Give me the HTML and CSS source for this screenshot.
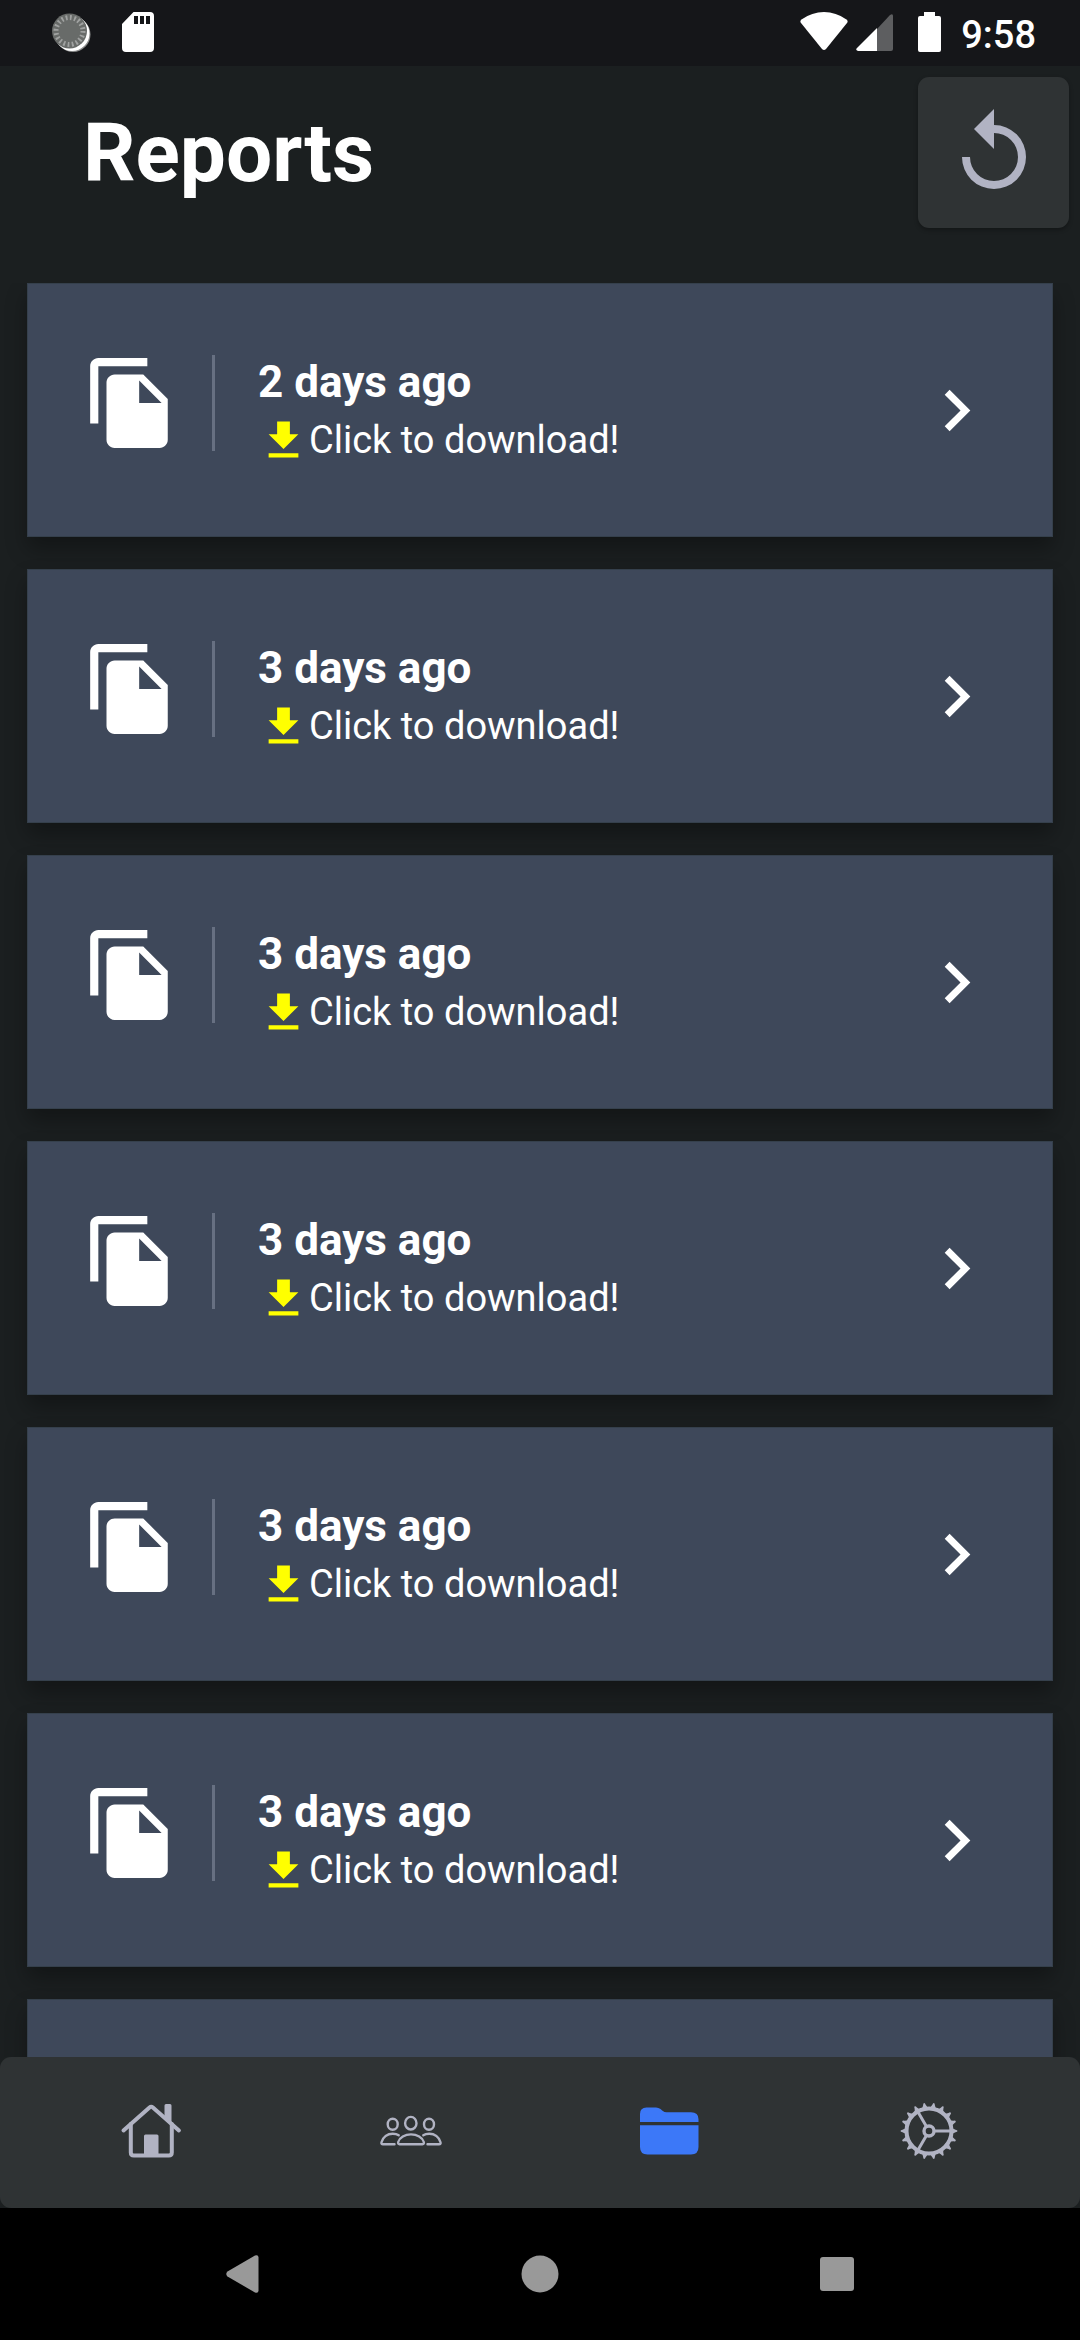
FILE: index.html
```html
<!DOCTYPE html>
<html lang="en">
<head>
<meta charset="utf-8">
<meta name="viewport" content="width=device-width, initial-scale=1">
<title>Reports</title>
<link rel="stylesheet" href="styles.css">
</head>
<body>
<svg class="sprite" aria-hidden="true">
  <symbol id="copy" viewBox="0 0 24 24"><path d="M16 1H4c-1.100 0-2 .9-2 2v14h2V3h12V1zm-1 4l6 6v10c0 1.100-.9 2-2 2H7.990C6.890 23 6 22.100 6 21V7c0-1.100.89-2 1.990-2H15zm-1 7h5.500L14 6.500V12z"/></symbol>
  <symbol id="download" viewBox="0 0 24 24"><path d="M19 9h-4V3H9v6H5l7 7 7-7zM5 18v2h14v-2H5z"/></symbol>
  <symbol id="chevron" viewBox="0 0 24 24"><path d="M8.590 16.580 13.170 12 8.590 7.410 10 6l6 6-6 6z"/></symbol>
</svg>

<div class="status">
  <div class="status-group">
    <svg class="status-sync" width="40" height="42" viewBox="0 0 40 42" aria-hidden="true">
      <circle cx="21" cy="22.500" r="17.500" fill="#8a8b8b"/>
      <circle cx="20" cy="21.500" r="17.500" fill="#fff"/>
      <circle cx="17.500" cy="19" r="17.500" fill="#686b69"/>
      <circle cx="17.500" cy="19" r="13.500" fill="none" stroke="#a0a2a1" stroke-width="5" stroke-dasharray="1.800 2.441"/>
    </svg>
    <svg width="32" height="42" viewBox="0 0 32 42" aria-hidden="true">
      <path fill="#fff" fill-rule="evenodd" d="M11.500 0H28q4 0 4 4v32q0 4-4 4H4q-4 0-4-4V12zM12 4v8h4V4zm6 0v8h4V4zm6 0v8h4V4z"/>
    </svg>
  </div>
  <div class="status-group status-right">
    <svg width="48" height="42" viewBox="0 0 48 42" aria-hidden="true"><path fill="#fff" d="M24 0Q36 0 46.500 7.500 48.500 9 47 11L26 37q-2 2-4 0L1 11Q-.5 9 1.500 7.500 12 0 24 0z"/></svg>
    <svg class="status-signal" width="38" height="42" viewBox="0 0 38 42" aria-hidden="true"><path fill="#5d5e60" d="M21 17 34 3q3-2 3 1v33q0 2-2 2H21z"/><path fill="#fff" d="M21 16v23H2q-3-1-1-3z"/></svg>
    <svg class="status-battery" width="23" height="42" viewBox="0 0 23 42" aria-hidden="true"><path fill="#fff" d="M6 0h11v4h4q2 0 2 2v32q0 2-2 2H2q-2 0-2-2V6q0-2 2-2h4z"/></svg>
    <time class="clock">9:58</time>
  </div>
</div>

<header class="header">
  <h1 class="title">Reports</h1>
  <button class="refresh" type="button" aria-label="Refresh">
    <svg width="96" height="96" viewBox="0 0 24 24" aria-hidden="true"><path fill="currentColor" d="M12 5V1L7 6l5 5V7a6 6 0 1 1-6 6H4a8 8 0 1 0 8-8z"/></svg>
  </button>
</header>

<main class="reports">
  <ul class="list">
    <li><a class="card" href="#"><svg class="card-icon"><use href="#copy"/></svg><span class="divider"></span><span class="card-text"><strong class="age">2 days ago</strong><span class="action"><svg class="download"><use href="#download"/></svg>Click to download!</span></span><svg class="chevron"><use href="#chevron"/></svg></a></li>
    <li><a class="card" href="#"><svg class="card-icon"><use href="#copy"/></svg><span class="divider"></span><span class="card-text"><strong class="age">3 days ago</strong><span class="action"><svg class="download"><use href="#download"/></svg>Click to download!</span></span><svg class="chevron"><use href="#chevron"/></svg></a></li>
    <li><a class="card" href="#"><svg class="card-icon"><use href="#copy"/></svg><span class="divider"></span><span class="card-text"><strong class="age">3 days ago</strong><span class="action"><svg class="download"><use href="#download"/></svg>Click to download!</span></span><svg class="chevron"><use href="#chevron"/></svg></a></li>
    <li><a class="card" href="#"><svg class="card-icon"><use href="#copy"/></svg><span class="divider"></span><span class="card-text"><strong class="age">3 days ago</strong><span class="action"><svg class="download"><use href="#download"/></svg>Click to download!</span></span><svg class="chevron"><use href="#chevron"/></svg></a></li>
    <li><a class="card" href="#"><svg class="card-icon"><use href="#copy"/></svg><span class="divider"></span><span class="card-text"><strong class="age">3 days ago</strong><span class="action"><svg class="download"><use href="#download"/></svg>Click to download!</span></span><svg class="chevron"><use href="#chevron"/></svg></a></li>
    <li><a class="card" href="#"><svg class="card-icon"><use href="#copy"/></svg><span class="divider"></span><span class="card-text"><strong class="age">3 days ago</strong><span class="action"><svg class="download"><use href="#download"/></svg>Click to download!</span></span><svg class="chevron"><use href="#chevron"/></svg></a></li>
    <li><a class="card" href="#" aria-label="Report"></a></li>
  </ul>
</main>

<nav class="tabs">
  <a class="tab" href="#" aria-label="Home">
    <svg class="tab-icon" viewBox="0 0 60 60" fill="none" stroke="currentColor" stroke-width="4" stroke-linecap="round" stroke-linejoin="round">
      <path d="M1.500 29.500 27.500 6.500q1.700-1.500 3.400 0l26 23"/><path d="M8.800 23v28.500q0 3 3 3h35q3 0 3-3V23"/>
      <path fill="currentColor" stroke="none" d="M22 35q0-1.500 1.500-1.500H35q1.500 0 1.500 1.500v20H22zM42.500 4.500q0-1.500 1.500-1.500h4q1.500 0 1.500 1.500V22l-7-6z"/>
    </svg>
  </a>
  <a class="tab" href="#" aria-label="Team">
    <svg class="tab-icon" viewBox="0 0 60 60" fill="none" stroke="currentColor" stroke-width="2.400" stroke-linecap="round">
      <ellipse cx="29.800" cy="22.200" rx="5.700" ry="6.300"/><ellipse cx="11.700" cy="23.300" rx="5" ry="5.500"/><ellipse cx="48" cy="23.300" rx="5" ry="5.500"/>
      <path d="M18.500 43.200h23q1.700 0 1.300-2.200C41.500 36.500 36 33.400 30 33.400S18.500 36.500 17.200 41q-.4 2.200 1.300 2.200z"/>
      <path d="M13.500 43.200H2q-2 0-1.500-2C2 35.800 6.500 32.700 11.700 32.700q3.800 0 6 1.600M46.500 43.200H58q2 0 1.500-2C58 35.800 53.500 32.700 48.300 32.700q-3.800 0-6 1.600"/>
    </svg>
  </a>
  <a class="tab tab-active" href="#" aria-label="Reports" aria-current="page">
    <svg class="tab-icon" viewBox="0 0 60 60" fill="currentColor">
      <path d="M0 21v-8q0-6.500 6.500-6.500H16q2.500 0 4.500 1.600l2 1.600q2 1.500 4 1.500H51q7.500 0 7.500 7V21zM0 24.300h58.500V46q0 7.500-7.500 7.500H7.500Q0 53.500 0 46z"/>
    </svg>
  </a>
  <a class="tab" href="#" aria-label="Settings">
    <svg class="tab-icon" viewBox="0 0 60 60" fill="none" stroke="currentColor">
      <circle cx="30" cy="30" r="22.500" stroke-width="4"/><circle cx="30" cy="30" r="5" stroke-width="3.400"/>
      <path stroke-width="3" d="M36 30h16M27 24.800l-8-13.900M27 35.200l-8 13.900"/>
      <g fill="currentColor" stroke="none">
        <g id="teeth"><path id="tooth" d="M52 26.500 56.500 28.700Q58.500 29 58.500 30T56.500 31.300L52 33.500z"/><use href="#tooth" transform="rotate(20 30 30)"/><use href="#tooth" transform="rotate(40 30 30)"/></g>
        <use href="#teeth" transform="rotate(60 30 30)"/><use href="#teeth" transform="rotate(120 30 30)"/><use href="#teeth" transform="rotate(180 30 30)"/><use href="#teeth" transform="rotate(240 30 30)"/><use href="#teeth" transform="rotate(300 30 30)"/>
      </g>
    </svg>
  </a>
</nav>

<div class="system">
  <button class="key" type="button" aria-label="Back"><svg width="40" height="40" viewBox="0 0 40 40"><path fill="currentColor" d="M4.500 17.500 32 1.500q3.500-1 3.500 2v33q0 3-3.500 2L4.500 22.500q-2.500-2.500 0-5z"/></svg></button>
  <button class="key" type="button" aria-label="Home screen"><svg width="40" height="40" viewBox="0 0 40 40"><circle cx="20" cy="20" r="18.500" fill="currentColor"/></svg></button>
  <button class="key" type="button" aria-label="Recent apps"><svg width="40" height="40" viewBox="0 0 40 40"><rect x="3" y="3" width="34" height="34" rx="3" fill="currentColor"/></svg></button>
</div>
</body>
</html>
```
FILE: styles.css
```css
* {
  box-sizing: border-box;
}

body {
  display: flex;
  flex-direction: column;
  height: 100vh;
  margin: 0;
  background: #1b1f20;
  color: #fff;
  font-family: Roboto, "Noto Sans", sans-serif;
}

button {
  margin: 0;
  padding: 0;
  border: 0;
  font: inherit;
}

svg {
  display: block;
  flex: none;
}

.sprite {
  position: absolute;
  width: 0;
  height: 0;
}

/* Status bar */
.status {
  display: flex;
  flex: none;
  justify-content: space-between;
  align-items: center;
  height: 66px;
  padding: 0 44px 0 52px;
  background: #151619;
}

.status-group {
  display: flex;
  align-items: center;
  gap: 30px;
}

.status-right {
  gap: 8px;
}

.status-battery {
  margin: 0 12px 0 16px;
}

.clock {
  padding-top: 4px;
  font-size: 38px;
  font-weight: 500;
  line-height: 48px;
}

/* Page header */
.header {
  display: flex;
  flex: none;
  justify-content: space-between;
  align-items: center;
  padding: 11px 11px 55px 83px;
}

.title {
  margin: 0;
  font-size: 82px;
  font-weight: 700;
  line-height: 100px;
}

.refresh {
  display: grid;
  place-items: center;
  width: 151px;
  height: 151px;
  border-radius: 11px;
  background: #2f3334;
  color: #b1b3c3;
  box-shadow: 0 2px 4px rgba(0, 0, 0, 0.3);
}

/* Report cards */
.reports {
  flex: 1;
  min-height: 0;
  overflow-y: auto;
  scrollbar-width: none;
}

.list {
  display: flex;
  flex-direction: column;
  gap: 32px;
  margin: 0;
  padding: 0 27px;
  list-style: none;
}

.card {
  display: flex;
  align-items: center;
  height: 254px;
  padding: 0 54px;
  border: 1px solid #35404c;
  background: #3e485a;
  color: #fff;
  fill: #fff;
  text-decoration: none;
  box-shadow: 0 12px 20px rgba(0, 0, 0, 0.3);
}

.card-icon {
  width: 98px;
  height: 98px;
  margin-bottom: 14px;
}

.divider {
  width: 3px;
  height: 96px;
  margin: 0 43px 14px 32px;
  background: #677082;
}

.card-text {
  display: flex;
  flex: 1;
  flex-direction: column;
  gap: 6px;
  padding-top: 2px;
}

.age {
  font-size: 44px;
  font-weight: 700;
  line-height: 52px;
}

.action {
  display: flex;
  align-items: center;
  font-size: 38px;
  line-height: 52px;
}

.download {
  width: 51px;
  height: 51px;
  fill: #ff0;
}

.chevron {
  width: 83px;
  height: 83px;
}

/* Bottom tabs */
.tabs {
  display: grid;
  flex: none;
  grid-template-columns: repeat(4, 1fr);
  height: 151px;
  padding: 0 22px 4px;
  border-radius: 11px;
  background: #2f3334;
}

.tab {
  display: grid;
  place-items: center;
  color: #b1b3c3;
}

.tab-active {
  color: #3c78f8;
}

.tab-icon {
  width: 60px;
  height: 60px;
  overflow: visible;
}

/* System keys */
.system {
  display: grid;
  flex: none;
  grid-template-columns: repeat(3, 1fr);
  height: 132px;
  padding: 0 94px;
  background: #000;
}

.key {
  display: grid;
  place-items: center;
  background: none;
  color: #999;
}
```
